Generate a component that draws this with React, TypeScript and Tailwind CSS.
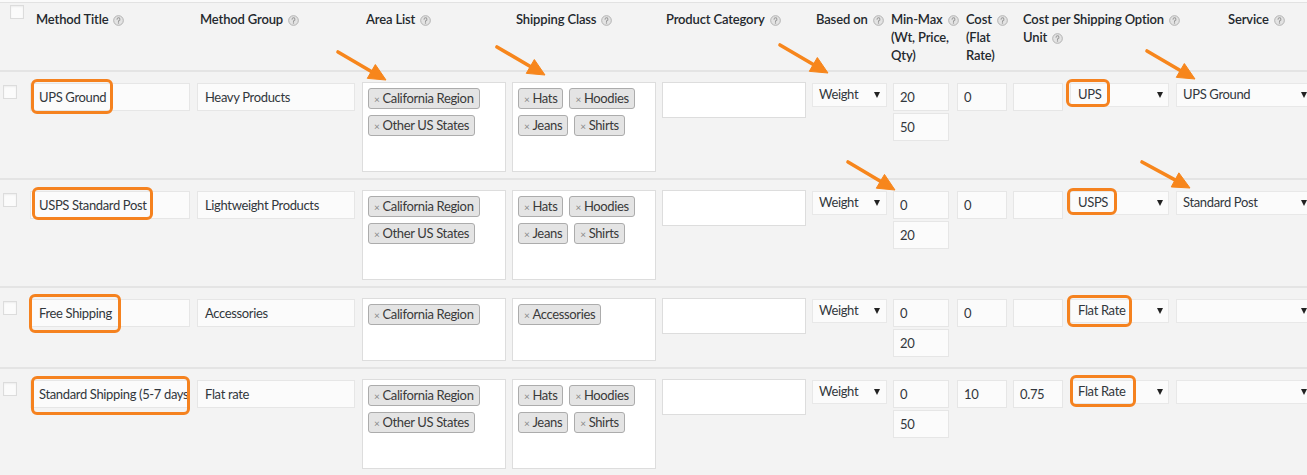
import React from "react";

const cols =
  "grid grid-cols-[30px_167px_165px_150px_150px_150px_81px_64px_56px_54px_109px_134px]";

type Row = {
  title: string;
  group: string;
  areas: string[];
  classes: string[];
  based: string;
  min: string;
  max: string;
  cost: string;
  unit: string;
  option: string;
  service: string;
  titleMark: string;
  optionMark: string;
};

const rows: Row[] = [
  {
    title: "UPS Ground",
    group: "Heavy Products",
    areas: ["California Region", "Other US States"],
    classes: ["Hats", "Hoodies", "Jeans", "Shirts"],
    based: "Weight",
    min: "20",
    max: "50",
    cost: "0",
    unit: "",
    option: "UPS",
    service: "UPS Ground",
    titleMark: "left-[1px] top-[-4px] w-[82px] h-[35px]",
    optionMark: "left-[-4px] top-[-4px] w-[44px] h-[28px]",
  },
  {
    title: "USPS Standard Post",
    group: "Lightweight Products",
    areas: ["California Region", "Other US States"],
    classes: ["Hats", "Hoodies", "Jeans", "Shirts"],
    based: "Weight",
    min: "0",
    max: "20",
    cost: "0",
    unit: "",
    option: "USPS",
    service: "Standard Post",
    titleMark: "left-[2px] top-[-4px] w-[121px] h-[33px]",
    optionMark: "left-[-3px] top-[-3px] w-[50px] h-[27px]",
  },
  {
    title: "Free Shipping",
    group: "Accessories",
    areas: ["California Region"],
    classes: ["Accessories"],
    based: "Weight",
    min: "0",
    max: "20",
    cost: "0",
    unit: "",
    option: "Flat Rate",
    service: "",
    titleMark: "left-[-1px] top-[-5px] w-[92px] h-[39px]",
    optionMark: "left-[-3px] top-[-4px] w-[65px] h-[32px]",
  },
  {
    title: "Standard Shipping (5-7 days)",
    group: "Flat rate",
    areas: ["California Region", "Other US States"],
    classes: ["Hats", "Hoodies", "Jeans", "Shirts"],
    based: "Weight",
    min: "0",
    max: "50",
    cost: "10",
    unit: "0.75",
    option: "Flat Rate",
    service: "",
    titleMark: "left-[1px] top-[-4px] w-[159px] h-[39px]",
    optionMark: "left-[0px] top-[-5px] w-[66px] h-[32px]",
  },
];

const Help = () => (
  <svg viewBox="0 0 20 20" className="inline-block w-[11px] h-[11px] ml-[5px] align-[-2px]">
    <circle cx="10" cy="10" r="8.8" fill="#e3e3e3" stroke="#ababab" strokeWidth="1.6" />
    <path
      d="M7.4 7.8a2.6 2.6 0 1 1 3.7 2.3c-.7.3-1.1.8-1.1 1.5v.6"
      fill="none"
      stroke="#9a9a9a"
      strokeWidth="1.9"
      strokeLinecap="round"
    />
    <circle cx="10" cy="14.6" r="1.2" fill="#9a9a9a" />
  </svg>
);

const Checkbox = ({ className }: { className: string }) => (
  <span
    className={`block w-[14px] h-[14px] bg-[#fbfbfb] border border-[#dcdcdc] shadow-[inset_0_1px_2px_rgba(0,0,0,0.06)] ${className}`}
  />
);

const Mark = ({ className }: { className: string }) => (
  <span
    className={`absolute pointer-events-none border-[3px] border-[#f5821f] rounded-[6px] ${className}`}
  />
);

const Input = ({ value, className }: { value: string; className: string }) => (
  <div
    className={`h-[28px] flex items-center pt-[2px] bg-[#fbfbfb] border border-[#e6e6e6] whitespace-nowrap overflow-hidden ${className}`}
  >
    {value}
  </div>
);

const Select = ({ value, className, arrow }: { value: string; className: string; arrow: string }) => (
  <div
    className={`relative h-[24px] flex items-center pl-[6px] bg-[#fbfbfb] border border-[#e8e8e8] whitespace-nowrap ${className}`}
  >
    {value}
    <span
      className={`absolute top-[8px] w-0 h-0 border-l-[3px] border-r-[3px] border-t-[6px] border-l-transparent border-r-transparent border-t-[#222] ${arrow}`}
    />
  </div>
);

const Tag = ({ label }: { label: string }) => (
  <span className="inline-flex items-center h-[21px] pl-[5px] pr-[5px] bg-[#e4e4e4] border border-[#acacac] rounded-[3px] text-[#3a3a3a] leading-none">
    <span className="text-[10px] text-[#888] mr-[3px]">×</span>
    {label}
  </span>
);

const Multi = ({ tags }: { tags: string[] }) => (
  <div className="w-[144px] bg-white border border-[#dddddd] p-[5px] flex flex-wrap gap-[6px] content-start">
    {tags.map((t) => (
      <Tag key={t} label={t} />
    ))}
    <div className="w-full h-[24px]" />
  </div>
);

const arrows: [number, number, number, number][] = [
  [338, 52, 386, 80],
  [497, 47, 545, 75],
  [780, 45, 828, 73],
  [1147, 51, 1195, 79],
  [848, 162, 895, 190],
  [1142, 162, 1190, 188],
];

const Arrows = () => (
  <svg className="absolute inset-0 pointer-events-none" width="1307" height="475">
    {arrows.map(([x1, y1, x2, y2], i) => {
      const len = Math.hypot(x2 - x1, y2 - y1);
      const dx = (x2 - x1) / len;
      const dy = (y2 - y1) / len;
      const bx = x2 - dx * 17;
      const by = y2 - dy * 17;
      const pts = `${x2},${y2} ${bx - dy * 8},${by + dx * 8} ${bx + dy * 8},${by - dx * 8}`;
      return (
        <g key={i} fill="#f7861c" stroke="#f7861c">
          <line x1={x1} y1={y1} x2={bx + dx * 2} y2={by + dy * 2} strokeWidth="3.6" strokeLinecap="round" />
          <polygon points={pts} strokeWidth="1" strokeLinejoin="round" />
        </g>
      );
    })}
  </svg>
);

export default function App() {
  return (
    <div className="relative w-[1307px] h-[475px] overflow-hidden bg-[#f3f3f3] font-['Lato',sans-serif] text-[13px] tracking-[-0.35px] text-[#32373c]">
      <div className="h-[3px] bg-[#fafafa] border-b border-[#e2e2e2]" />

      <div className={`${cols} h-[69px] pt-[7px] border-b-2 border-[#e4e4e4] font-semibold tracking-[-0.15px] text-[#23282d] leading-[18px] whitespace-nowrap`}>
        <div>
          <Checkbox className="ml-[10px] mt-[-5px]" />
        </div>
        <div className="pl-[6px]">
          Method Title
          <Help />
        </div>
        <div className="pl-[3px]">
          Method Group
          <Help />
        </div>
        <div className="pl-[4px]">
          Area List
          <Help />
        </div>
        <div className="pl-[4px]">
          Shipping Class
          <Help />
        </div>
        <div className="pl-[4px]">
          Product Category
          <Help />
        </div>
        <div className="pl-[4px]">
          Based on
          <Help />
        </div>
        <div className="ml-[-2px]">
          Min-Max
          <Help />
          <br />
          (Wt, Price,
          <br />
          Qty)
        </div>
        <div className="pl-[9px]">
          Cost
          <Help />
          <br />
          (Flat
          <br />
          Rate)
        </div>
        <div className="col-span-2 pl-[10px]">
          Cost per Shipping Option
          <Help />
          <br />
          Unit
          <Help />
        </div>
        <div className="pl-[52px]">
          Service
          <Help />
        </div>
      </div>

      {rows.map((r, i) => (
        <div
          key={i}
          className={`${cols} items-start pt-[10px] pb-[6px] ${i < rows.length - 1 ? "border-b-2 border-[#e4e4e4]" : ""}`}
        >
          <div>
            <Checkbox className="ml-[3px] mt-[3px]" />
          </div>
          <div className="relative mt-[1px] w-[160px]">
            <Input value={r.title} className="px-[8px]" />
            <Mark className={r.titleMark} />
          </div>
          <Input value={r.group} className="mt-[1px] w-[158px] px-[7px]" />
          <Multi tags={r.areas} />
          <Multi tags={r.classes} />
          <Multi tags={[]} />
          <Select value={r.based} className="mt-[1px] w-[75px]" arrow="right-[6px]" />
          <div className="mt-[1px] flex flex-col gap-[2px]">
            <Input value={r.min} className="w-[56px] px-[6px]" />
            <Input value={r.max} className="w-[56px] px-[6px]" />
          </div>
          <Input value={r.cost} className="mt-[1px] w-[50px] px-[6px]" />
          <Input value={r.unit} className="mt-[1px] w-[50px] px-[6px]" />
          <div className="relative mt-[1px] ml-[3px] w-[99px]">
            <Select value={r.option} className="w-[99px] pl-[7px]" arrow="right-[5px]" />
            <Mark className={r.optionMark} />
          </div>
          <Select value={r.service} className="mt-[1px] w-[134px]" arrow="right-[2px]" />
        </div>
      ))}

      <Arrows />
    </div>
  );
}
